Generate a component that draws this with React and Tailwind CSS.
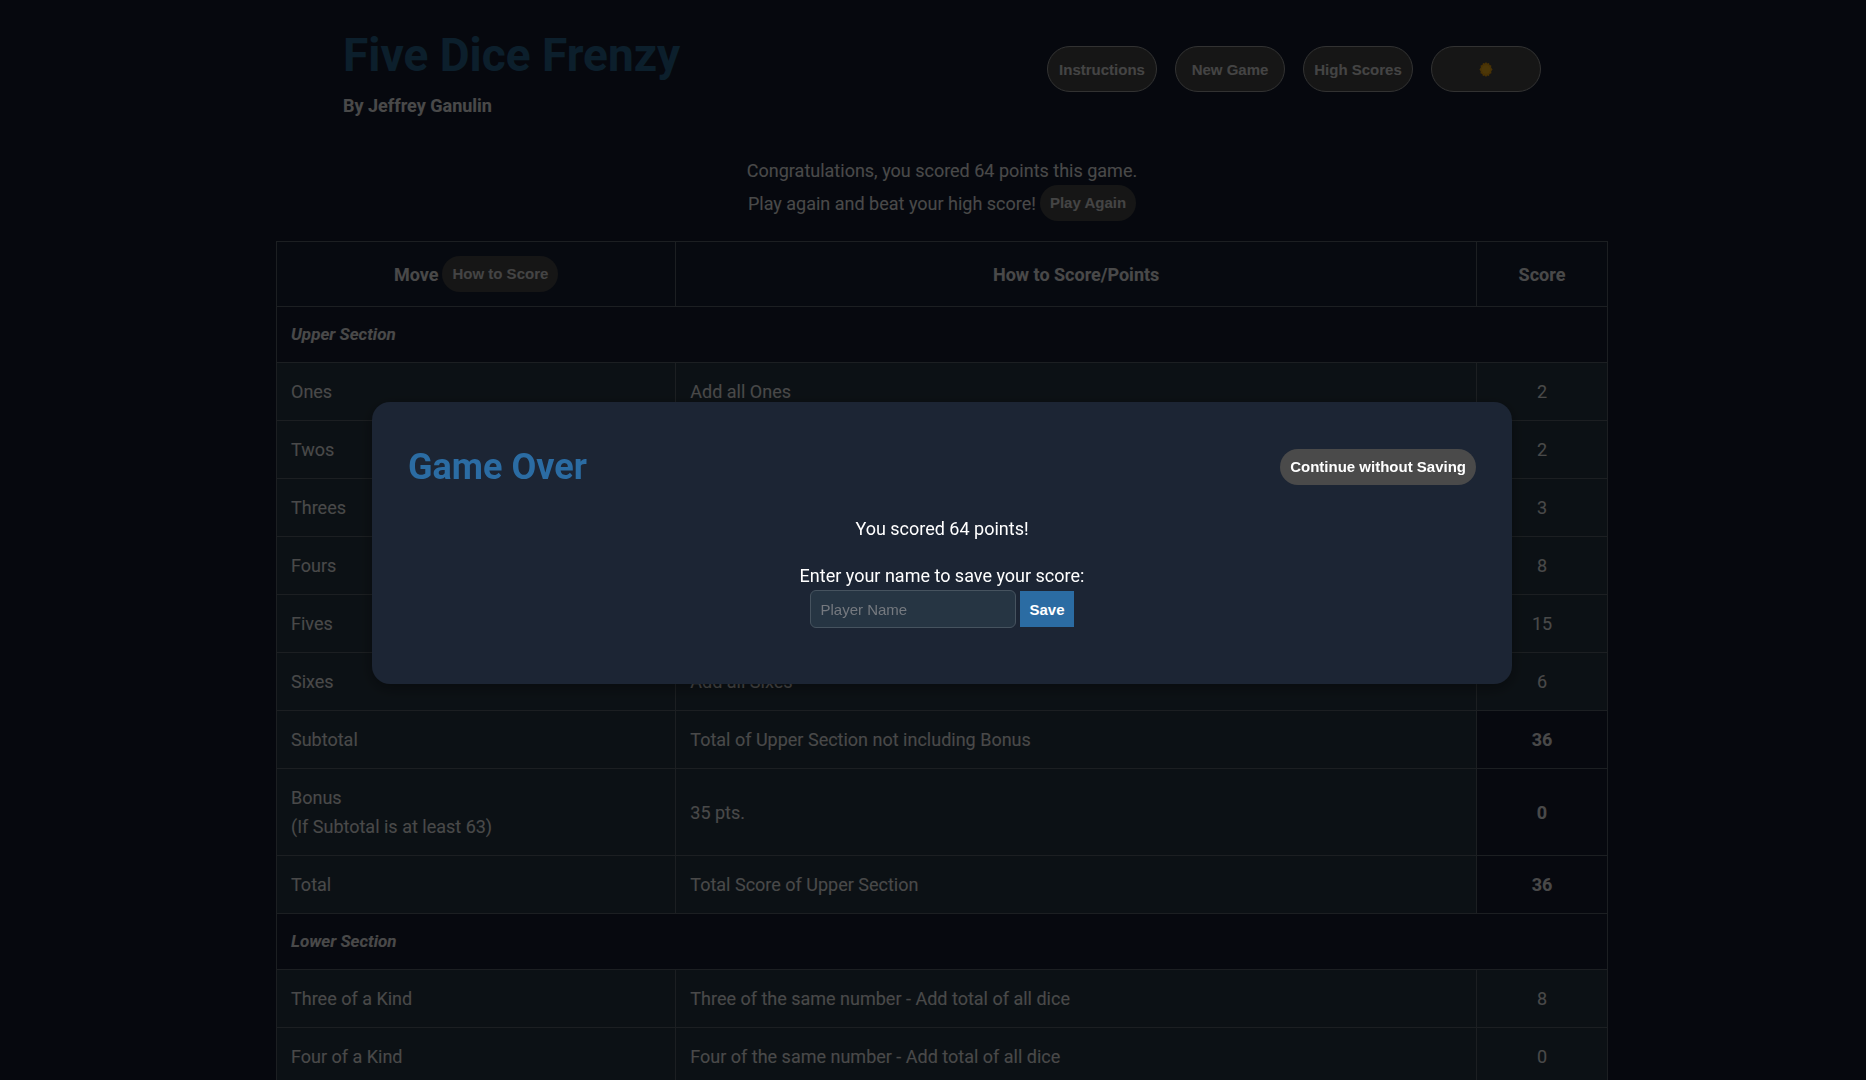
const upper = [
  ["Ones", "Add all Ones", 2],
  ["Twos", "Add all Twos", 2],
  ["Threes", "Add all Threes", 3],
  ["Fours", "Add all Fours", 8],
  ["Fives", "Add all Fives", 15],
  ["Sixes", "Add all Sixes", 6],
];
const totals = [
  [["Subtotal"], "Total of Upper Section not including Bonus", 36],
  [["Bonus", "(If Subtotal is at least 63)"], "35 pts.", 0],
  [["Total"], "Total Score of Upper Section", 36],
];
const lower = [
  ["Three of a Kind", "Three of the same number - Add total of all dice", 8],
  ["Four of a Kind", "Four of the same number - Add total of all dice", 0],
];

const line = "border border-[#606a72]";
const cell = line + " px-[14px] py-[14px] bg-[#2b3b48]";
const arial = "font-['Liberation_Sans',Arial,sans-serif] font-bold text-[15px]";
const small = arial + " h-9 rounded-full bg-[#4a4a4a] px-[10px] leading-5";
const nav = arial + " flex h-[46px] w-[110px] items-center justify-center rounded-full border border-[#a8a8a8] bg-[#4a4a4a] text-[#e4e4e4]";

function ScoreRow({ name, how, score }) {
  return (
    <tr>
      <td className={cell}>{name}</td>
      <td className={cell}>{how}</td>
      <td className={cell + " text-center"}>{score}</td>
    </tr>
  );
}

function SectionRow({ children }) {
  return (
    <tr>
      <th colSpan={3} className={line + " bg-[#192134] px-[14px] py-[14px] text-left text-[17px] leading-[27px] font-bold italic"}>
        {children}
      </th>
    </tr>
  );
}

export default function App() {
  return (
    <div className="h-screen overflow-hidden bg-[#141d30] pl-[18px] font-[Roboto,sans-serif] text-[18px] leading-[29px] text-[#f6f6f6]">
      <header className="mx-auto flex max-w-[1198px] items-start justify-between pt-5">
        <div>
          <h1 className="text-[46px] leading-[71px] font-bold text-[#2b6a94]">Five Dice Frenzy</h1>
          <p className="font-bold">By Jeffrey Ganulin</p>
        </div>
        <nav className="mt-[26px] flex gap-[18px]">
          <button className={nav}>Instructions</button>
          <button className={nav}>New Game</button>
          <button className={nav}>High Scores</button>
          <button className={nav} aria-label="Light mode">
            <svg width="14" height="15" viewBox="0 0 14 16" aria-hidden="true">
              <path d="M7 0l1.2 1.6 2-.5.5 2 2 .7-.3 2L14 8l-1.5 1.9.3 2.1-2.1.8-.5 2-2-.4L7 16l-1.300-1.600-2 .4-.6-2-2-.8.3-2.100L0 8l1.500-2.200-.3-2 2-.7.6-2 2 .5z" fill="#f5a80e" />
              <circle cx="7" cy="8" r="4.500" fill="#ffb91c" />
            </svg>
          </button>
        </nav>
      </header>

      <main className="mx-auto max-w-[1332px]">
        <div className="mt-9 text-center">
          <p>Congratulations, you scored 64 points this game.</p>
          <p className="flex h-9 items-center justify-center gap-1">
            Play again and beat your high score! <button className={small + " text-[#e4e4e4]"}>Play Again</button>
          </p>
        </div>
        <table className="mt-5 w-full table-fixed border-collapse">
          <colgroup>
            <col className="w-[30%]" />
            <col />
            <col className="w-[131px]" />
          </colgroup>
          <thead>
            <tr className="bg-[#1a2336]">
              <th className={line + " py-[14px]"}>
                <div className="flex items-center justify-center gap-1">
                  Move <button className={small + " text-[#e4e4e4]"}>How to Score</button>
                </div>
              </th>
              <th className={line}>How to Score/Points</th>
              <th className={line}>Score</th>
            </tr>
          </thead>
          <tbody>
            <SectionRow>Upper Section</SectionRow>
            {upper.map(([n, h, s]) => <ScoreRow key={n} name={n} how={h} score={s} />)}
            {totals.map(([names, h, s]) => (
              <tr key={names[0]}>
                <td className={cell}>{names.map((n) => <div key={n}>{n}</div>)}</td>
                <td className={cell}>{h}</td>
                <td className={line + " bg-[#192134] text-center font-bold"}>{s}</td>
              </tr>
            ))}
            <SectionRow>Lower Section</SectionRow>
            {lower.map(([n, h, s]) => <ScoreRow key={n} name={n} how={h} score={s} />)}
          </tbody>
        </table>
      </main>

      <div className="fixed inset-0 flex items-center justify-center bg-black/70 pl-[18px]">
        <section role="dialog" aria-modal="true" aria-labelledby="game-over" className="mt-1.5 w-full max-w-[1140px] rounded-[18px] bg-[#1c2534] px-9 pt-9 pb-14 text-white shadow-[0_4px_16px_rgba(0,0,0,0.4)]">
          <div className="flex items-center justify-between">
            <h2 id="game-over" className="text-[36px] leading-[58px] font-bold text-[#2b6ca3]">Game Over</h2>
            <button className={small + " text-white"}>Continue without Saving</button>
          </div>
          <form className="mt-[18px] text-center" onSubmit={(e) => e.preventDefault()}>
            <p>You scored 64 points!</p>
            <label htmlFor="player" className="mt-[18px] block">Enter your name to save your score:</label>
            <div className="flex items-center justify-center gap-1">
              <input id="player" type="text" placeholder="Player Name" className="h-[38px] w-[206px] rounded-md border border-[#46535f] bg-[#263543] px-[9px] font-['Liberation_Sans',Arial,sans-serif] text-[15px] text-white placeholder:text-[#75797f]" />
              <button type="submit" className={arial + " h-9 bg-[#2b6ca3] px-[9px] text-white"}>Save</button>
            </div>
          </form>
        </section>
      </div>
    </div>
  );
}
